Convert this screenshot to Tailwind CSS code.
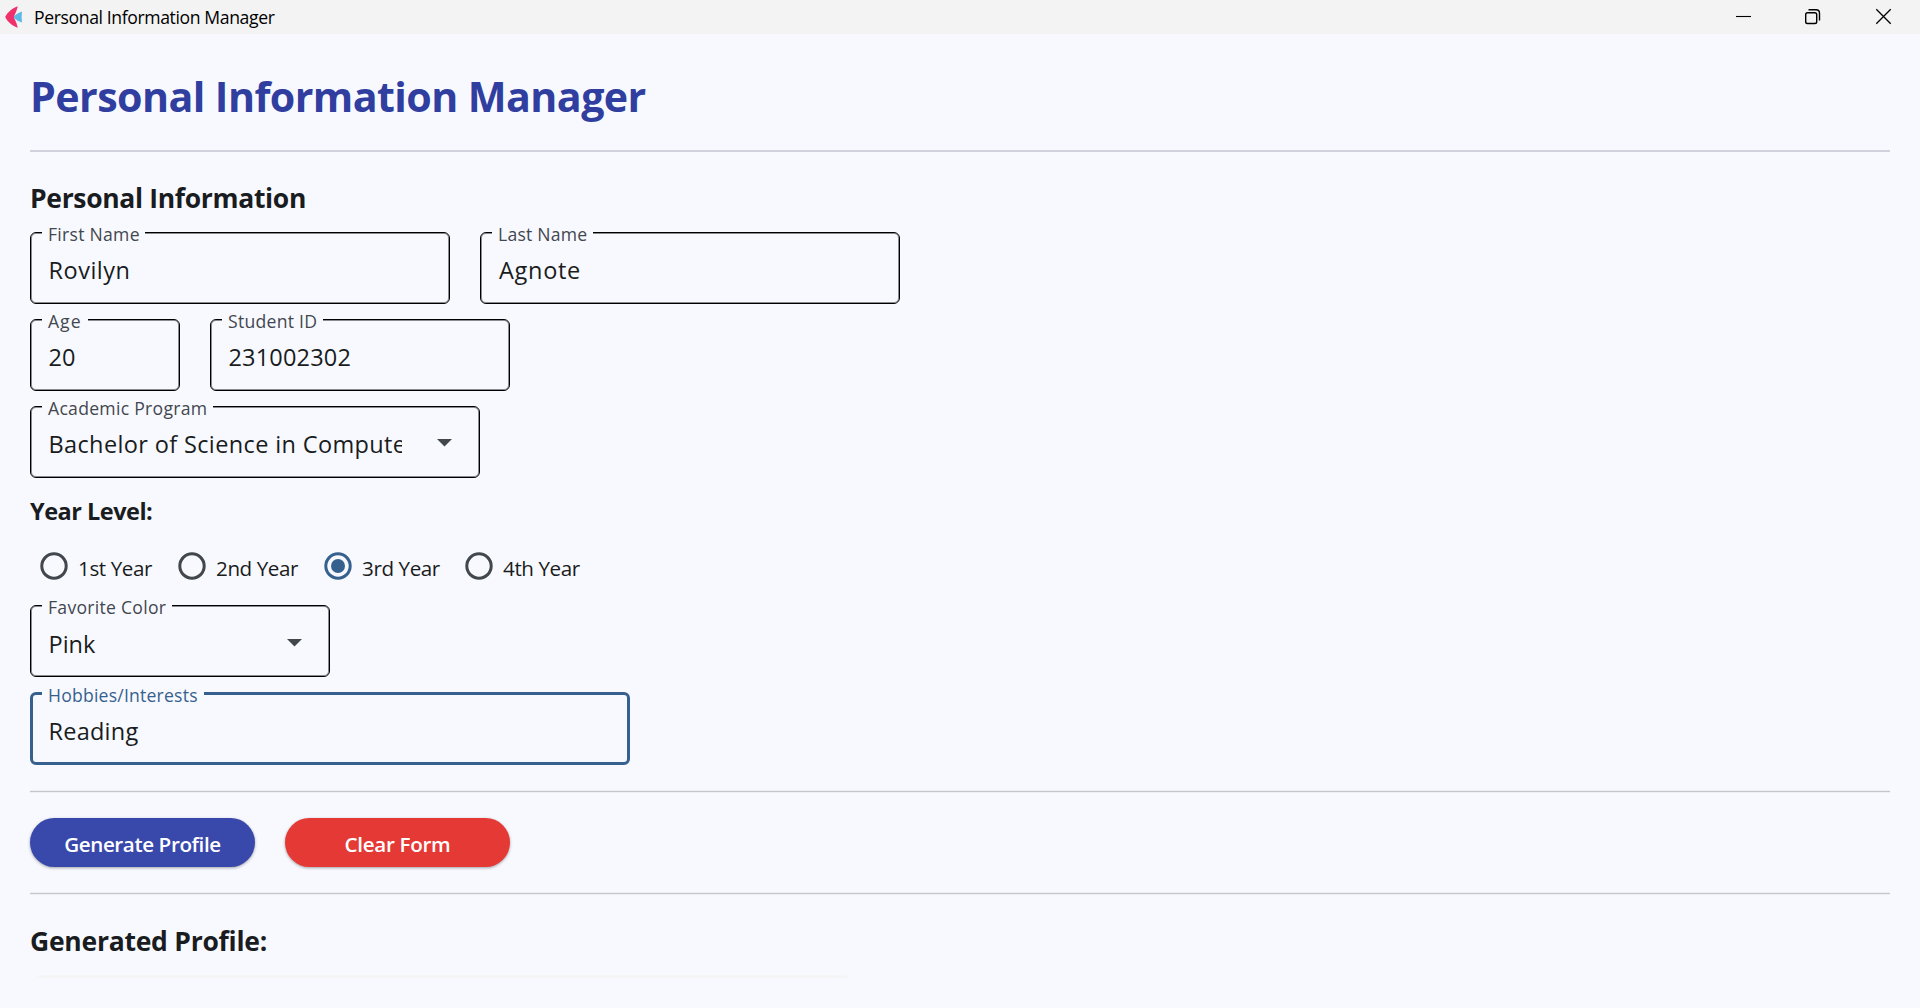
<!DOCTYPE html>
<html lang="en">
<head>
<meta charset="utf-8">
<title>Personal Information Manager</title>
<script src="https://cdn.jsdelivr.net/npm/@tailwindcss/browser@4"></script>
</head>
<body class="h-[1008px] overflow-hidden bg-[#f8f9ff] font-['Open_Sans','Noto_Sans',sans-serif] text-[#191c20]">
<div class="flex h-full flex-col">
  <header class="flex h-[34px] shrink-0 items-center bg-[#f3f3f3] text-black">
    <svg class="ml-[5px] h-[22px] w-[17px]" viewBox="0 0 17 22">
      <path d="M12.800 0.300C7.500 2 3 6 0.500 10.300q-.4.700 0 1.400C3 16 7.500 20 12.800 21.700Q11.800 17 9.300 12.200Q8.500 11 9.300 9.800Q11.800 5 12.800 0.300z" fill="#f0306a"/>
      <path d="M17 5.400Q16.200 11 17 16.600Q13 15.500 9.300 12.200Q8.500 11 9.300 9.800Q13 6.500 17 5.400z" fill="#5bb8e8"/>
    </svg>
    <span class="ml-3 pb-px text-[17.6px] leading-6 tracking-[-0.38px]">Personal Information Manager</span>
    <div class="ml-auto flex items-center pr-[28px] pb-px">
      <svg class="h-[17px] w-[17px]" viewBox="0 0 17 17" fill="none" stroke="#000" stroke-width="1.1"><path d="M1 8.500h15"/></svg>
      <svg class="ml-[52px] h-[17px] w-[17px]" viewBox="0 0 17 17" fill="none" stroke="#000" stroke-width="1.4"><rect x="1.700" y="4.700" width="11" height="10.800" rx="1.800"/><path d="M4.500 1.700H12Q15.500 1.700 15.500 5.200V12.500"/></svg>
      <svg class="ml-[54px] h-[17px] w-[17px]" viewBox="0 0 17 17" fill="none" stroke="#000" stroke-width="1.300"><path d="M1.300 1.300l14.400 14.400M15.700 1.300L1.300 15.700"/></svg>
    </div>
  </header>

  <main class="flex flex-col px-[30px] pt-8">
    <h1 class="text-[41.2px] leading-[60px] font-bold tracking-[-0.58px]">
      <span class="text-[#303f9f]">Personal Information Manager</span>
    </h1>
    <div class="mt-6 h-[2px] bg-[#d1d2dc]"></div>

    <h2 class="mt-7 text-[26.5px] leading-9 font-bold tracking-[-0.33px]">Personal Information</h2>

    <div class="mt-4 flex gap-[30px]">
      <div class="relative h-[72px] w-[420px] rounded-md border border-black pt-[19px] pl-[17.5px] shadow-[inset_0_0_0_1px_#8a8b90]">
        <label class="absolute -top-[9px] left-[11px] bg-[#f8f9ff] pr-[5px] pl-[6px] text-[17.6px] leading-5 tracking-[0.27px] text-[#42474e]">First Name</label>
        <div class="text-[23.5px] leading-9 tracking-[0.5px]">Rovilyn</div>
      </div>
      <div class="relative h-[72px] w-[420px] rounded-md border border-black pt-[19px] pl-[18px] shadow-[inset_0_0_0_1px_#8a8b90]">
        <label class="absolute -top-[9px] left-[11px] bg-[#f8f9ff] pr-[6px] pl-[6px] text-[17.6px] leading-5 tracking-[0.23px] text-[#42474e]">Last Name</label>
        <div class="text-[23.5px] leading-9 tracking-[0.7px]">Agnote</div>
      </div>
    </div>

    <div class="mt-[15px] flex gap-[30px]">
      <div class="relative h-[72px] w-[150px] rounded-md border border-black pt-[19px] pl-[17.5px] shadow-[inset_0_0_0_1px_#8a8b90]">
        <label class="absolute -top-[9px] left-[11px] bg-[#f8f9ff] pr-[6px] pl-[6px] text-[17.6px] leading-5 tracking-[1px] text-[#42474e]">Age</label>
        <div class="text-[23.5px] leading-9 tracking-[0.12px]">20</div>
      </div>
      <div class="relative h-[72px] w-[300px] rounded-md border border-black pt-[19px] pl-[17.5px] shadow-[inset_0_0_0_1px_#8a8b90]">
        <label class="absolute -top-[9px] left-[11px] bg-[#f8f9ff] pr-[6px] pl-[6px] text-[17.6px] leading-5 tracking-[0.26px] text-[#42474e]">Student ID</label>
        <div class="text-[23.5px] leading-9 tracking-[0.18px]">231002302</div>
      </div>
    </div>

    <div class="relative mt-[15px] flex h-[72px] w-[450px] rounded-md border border-black pt-[19px] pl-[17.5px] shadow-[inset_0_0_0_1px_#8a8b90]">
      <label class="absolute -top-[9px] left-[11px] bg-[#f8f9ff] pr-[6px] pl-[6px] text-[17.6px] leading-5 tracking-[0.28px] text-[#42474e]">Academic Program</label>
      <div class="w-[353.5px] overflow-hidden text-[23.5px] leading-9 tracking-[0.37px] whitespace-nowrap">Bachelor of Science in Compute</div>
      <svg class="mt-[13px] ml-[35px] h-[8px] w-[15px]" viewBox="0 0 15 8"><path d="M0 0h15L7.500 7.500z" fill="#42474e"/></svg>
    </div>

    <h3 class="mt-[17px] text-[23.5px] leading-8 font-bold tracking-[-0.5px]">Year Level:</h3>

    <div class="mt-[20px] flex h-[37px] items-center pl-[10px] text-[20.6px] leading-9 tracking-[-0.4px]">
      <div class="flex w-[138px] items-center gap-[10px]">
        <svg class="h-[28px] w-[28px] shrink-0" viewBox="0 0 28 28"><circle cx="14" cy="14" r="12.200" fill="none" stroke="#42474e" stroke-width="3"/></svg>
        <span class="pt-[4px]">1st Year</span>
      </div>
      <div class="flex w-[146px] items-center gap-[10px]">
        <svg class="h-[28px] w-[28px] shrink-0" viewBox="0 0 28 28"><circle cx="14" cy="14" r="12.200" fill="none" stroke="#42474e" stroke-width="3"/></svg>
        <span class="pt-[4px]">2nd Year</span>
      </div>
      <div class="flex w-[141px] items-center gap-[10px]">
        <svg class="h-[28px] w-[28px] shrink-0" viewBox="0 0 28 28"><circle cx="14" cy="14" r="12.200" fill="none" stroke="#36618e" stroke-width="3"/><circle cx="14" cy="14" r="7" fill="#36618e"/></svg>
        <span class="pt-[4px]">3rd Year</span>
      </div>
      <div class="flex items-center gap-[10px]">
        <svg class="h-[28px] w-[28px] shrink-0" viewBox="0 0 28 28"><circle cx="14" cy="14" r="12.200" fill="none" stroke="#42474e" stroke-width="3"/></svg>
        <span class="pt-[4px]">4th Year</span>
      </div>
    </div>

    <div class="relative mt-[21px] flex h-[72px] w-[300px] rounded-md border border-black pt-[20px] pl-[17.5px] shadow-[inset_0_0_0_1px_#8a8b90]">
      <label class="absolute -top-[9px] left-[11px] bg-[#f8f9ff] pr-[6px] pl-[6px] text-[17.6px] leading-5 tracking-[0.27px] text-[#42474e]">Favorite Color</label>
      <div class="w-[203.5px] text-[23.5px] leading-9">Pink</div>
      <svg class="mt-[13px] ml-[35px] h-[8px] w-[15px]" viewBox="0 0 15 8"><path d="M0 0h15L7.500 7.500z" fill="#42474e"/></svg>
    </div>

    <div class="relative mt-[15px] h-[73px] w-[600px] rounded-md border-3 border-[#36618e] pt-[18px] pl-[15.5px]">
      <label class="absolute -top-[10px] left-[9px] bg-[#f8f9ff] pr-[6px] pl-[6px] text-[17.6px] leading-5 tracking-[0.21px] text-[#36618e]">Hobbies/Interests</label>
      <div class="text-[23.5px] leading-9 tracking-[0.24px]">Reading</div>
    </div>

    <div class="mt-[25px] h-[3px] border-y border-[#eeeff5] bg-[#c4c6cd]"></div>

    <div class="mt-[25px] flex gap-[30px] text-[20.6px] leading-[30px] font-semibold text-white">
      <button class="h-[49px] w-[225px] rounded-full bg-[#3949ab] pt-[3px] tracking-[-0.39px] shadow-[0_1px_3px_rgba(0,0,0,0.35)]">Generate Profile</button>
      <button class="h-[49px] w-[225px] rounded-full bg-[#e53935] pt-[3px] tracking-[-0.3px] shadow-[0_1px_3px_rgba(0,0,0,0.35)]">Clear Form</button>
    </div>

    <div class="mt-[25px] h-[3px] border-y border-[#eeeff5] bg-[#c4c6cd]"></div>

    <h2 class="mt-7 text-[26.5px] leading-9 font-bold tracking-[-0.25px]">Generated Profile:</h2>
    <div class="mt-4 h-[3px] w-[825px] overflow-hidden">
      <div class="h-[60px] rounded-[15px] bg-[#f5f5f5]"></div>
    </div>
  </main>
</div>
</body>
</html>
